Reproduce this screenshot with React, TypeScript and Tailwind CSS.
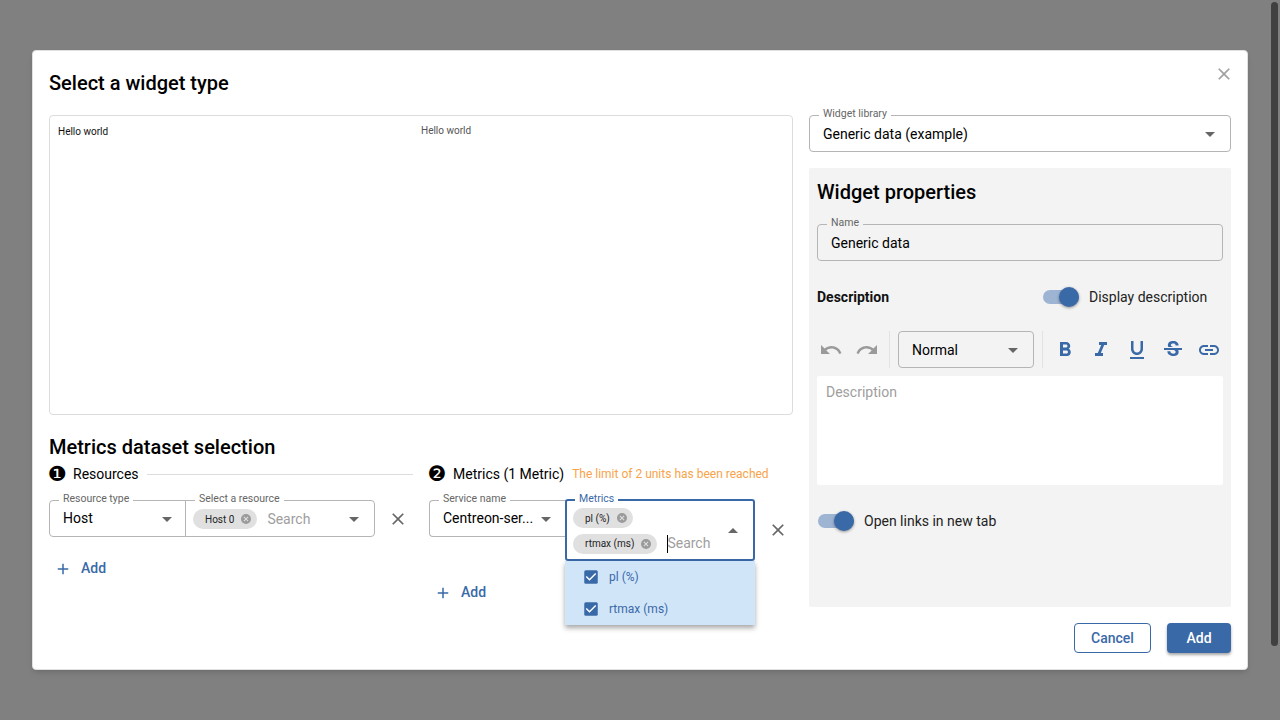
import React from "react";

const BLUE = "#3a69a7";

function Caret({ up = false, className = "" }: { up?: boolean; className?: string }) {
  return (
    <svg width="24" height="24" viewBox="0 0 24 24" className={`shrink-0 ${className}`} fill="#666666">
      <path d={up ? "m7 14 5-5 5 5z" : "m7 10 5 5 5-5z"} />
    </svg>
  );
}

function CloseX({ size = 20, color = "#666666" }: { size?: number; color?: string }) {
  return (
    <svg width={size} height={size} viewBox="0 0 24 24" fill={color} className="shrink-0">
      <path d="M19 6.41 17.59 5 12 10.59 6.41 5 5 6.41 10.59 12 5 17.59 6.41 19 12 13.41 17.59 19 19 17.59 13.41 12z" />
    </svg>
  );
}

function Legend({ text, left = "left-[9px]", bg = "bg-white", color = "text-[#666666]" }: { text: string; left?: string; bg?: string; color?: string }) {
  return (
    <span className={`absolute top-[-8px] ${left} ${bg} ${color} px-[4px] text-[10.5px] leading-[11px] whitespace-nowrap`}>{text}</span>
  );
}

function Chip({ text }: { text: string }) {
  return (
    <span className="flex h-[20px] w-fit items-center gap-[6px] rounded-full bg-[#e0e0e0] pl-[12px] pr-[5px] text-[10px] text-[#222222] whitespace-nowrap shrink-0">
      {text}
      <svg width="12" height="12" viewBox="0 0 24 24" fill="#9a9a9a">
        <path d="M12 2a10 10 0 1 0 0 20 10 10 0 0 0 0-20zm5 13.59L15.59 17 12 13.41 8.41 17 7 15.59 10.59 12 7 8.41 8.41 7 12 10.59 15.59 7 17 8.41 13.41 12z" />
      </svg>
    </span>
  );
}

function Num({ n }: { n: string }) {
  return (
    <span className="flex h-[20px] w-[16px] shrink-0 items-center justify-center font-['DejaVu_Sans',sans-serif] text-[21px] leading-none text-black">{n}</span>
  );
}

function Add() {
  return (
    <div className="flex items-center gap-[9px] text-[14px] font-medium" style={{ color: BLUE }}>
      <svg width="18" height="18" viewBox="0 0 24 24" fill={BLUE}><path d="M19 13h-6v6h-2v-6H5v-2h6V5h2v6h6z" /></svg>
      Add
    </div>
  );
}

function Switch() {
  return (
    <span className="relative block h-[14px] w-[36px] shrink-0 rounded-full bg-[#9db4d3]">
      <span className="absolute right-0 top-[-3px] h-[20px] w-[20px] rounded-full bg-[#3a69a7] shadow-[0_1px_3px_rgba(0,0,0,0.4)]" />
    </span>
  );
}

function Check() {
  return (
    <svg width="18" height="18" viewBox="0 0 24 24" className="shrink-0">
      <path fill={BLUE} d="M19 3H5a2 2 0 0 0-2 2v14a2 2 0 0 0 2 2h14a2 2 0 0 0 2-2V5a2 2 0 0 0-2-2z" />
      <path fill="#ffffff" d="M10 17l-5-5 1.41-1.41L10 14.17l7.59-7.59L19 8z" />
    </svg>
  );
}

function ToolIcon({ d, color = BLUE }: { d: string; color?: string }) {
  return (
    <svg width="24" height="24" viewBox="0 0 24 24" fill={color} className="shrink-0"><path d={d} /></svg>
  );
}

export default function App() {
  return (
    <div className="relative flex h-screen w-full items-start overflow-hidden bg-[#808080] pl-[32px] pt-[50px] font-['Roboto',sans-serif] text-black">
      <div className="flex h-[620px] w-[1216px] flex-col rounded-[4px] border border-[#e0e0e0] bg-white px-[16px] pt-[16px] shadow-md">
        <div className="flex min-h-0 flex-1 gap-[16px]">
          <div className="flex w-[744px] shrink-0 flex-col">
            <h1 className="h-[32px] text-[20px] font-medium leading-[32px]">Select a widget type</h1>
            <div className="mt-[16px] flex h-[300px] items-start rounded-[4px] border border-[#dcdcdc]">
              <span className="ml-[8px] mt-[10px] w-[363px] text-[10px] leading-[12px] text-[#111111]">Hello world</span>
              <span className="mt-[9px] text-[10px] leading-[12px] text-[#555555]">Hello world</span>
            </div>
            <h2 className="mt-[20px] h-[24px] text-[20px] font-medium leading-[24px]">Metrics dataset selection</h2>
            <div className="mt-[5px] flex gap-[16px]">
              <div className="w-[364px] shrink-0">
                <div className="flex h-[20px] items-center gap-[8px] text-[14px]">
                  <Num n="❶" />
                  <span>Resources</span>
                  <span className="h-px flex-1 bg-[#dddddd]" />
                </div>
                <div className="mt-[16px] flex items-center">
                  <div className="relative flex h-[37px] w-[137px] shrink-0 items-center justify-between rounded-l-[4px] border border-[#b5b5b5] pl-[13px] pr-[6px] text-[14px]">
                    <Legend text="Resource type" />
                    Host
                    <Caret />
                  </div>
                  <div className="relative ml-[-1px] flex h-[37px] w-[190px] shrink-0 items-center rounded-r-[4px] border border-[#b5b5b5] pl-[7px] pr-[8px]">
                    <Legend text="Select a resource" />
                    <span className="mt-px"><Chip text="Host 0" /></span>
                    <span className="ml-[10px] mt-px flex-1 text-[14px] text-[#9e9e9e]">Search</span>
                    <Caret />
                  </div>
                  <span className="ml-[13px]"><CloseX /></span>
                </div>
                <div className="mt-[21px] pl-[5px]"><Add /></div>
              </div>
              <div className="w-[364px] shrink-0">
                <div className="flex h-[20px] items-center gap-[8px] text-[14px]">
                  <Num n="❷" />
                  <span>Metrics (1 Metric)</span>
                  <span className="text-[12px] text-[#f7a34a]">The limit of 2 units has been reached</span>
                </div>
                <div className="mt-[15px] flex items-start">
                  <div className="relative mt-[1px] flex h-[37px] w-[137px] shrink-0 items-center justify-between rounded-l-[4px] border border-r-0 border-[#b5b5b5] pl-[13px] pr-[8px] text-[14px]">
                    <Legend text="Service name" />
                    <span className="whitespace-nowrap">Centreon-ser...</span>
                    <Caret />
                  </div>
                  <div className="relative ml-[-1px] flex h-[62px] w-[190px] shrink-0 rounded-[3px] border-2 border-[#3a69a7] pl-[6px] pr-[8px]">
                    <Legend text="Metrics" left="left-[8px]" color="text-[#3a69a7]" />
                    <div className="flex flex-1 flex-col gap-[5px] pt-[7px]">
                      <Chip text="pl (%)" />
                      <div className="flex items-center">
                        <Chip text="rtmax (ms)" />
                        <span className="ml-[10px] h-[18px] w-px bg-black" />
                        <span className="ml-[-1px] text-[14px] text-[#9e9e9e]">Search</span>
                      </div>
                    </div>
                    <Caret up className="mt-[18px]" />
                    <div className="absolute left-[-2px] top-[60px] z-10 w-[190px] bg-[#d1e5f9] text-[12px] text-[#3a69a7] shadow-[0_3px_5px_rgba(0,0,0,0.35)]">
                      <div className="flex h-[32px] items-center gap-[9px] pl-[17px]"><Check />pl (%)</div>
                      <div className="flex h-[32px] items-center gap-[9px] pl-[17px]"><Check />rtmax (ms)</div>
                    </div>
                  </div>
                  <span className="ml-[13px] mt-[21px]"><CloseX /></span>
                </div>
                <div className="mt-[21px] pl-[5px]"><Add /></div>
              </div>
            </div>
          </div>

          <div className="flex w-[422px] shrink-0 flex-col pt-[48px]">
            <div className="relative flex h-[37px] items-center justify-between rounded-[4px] border border-[#b5b5b5] pl-[13px] pr-[8px] text-[14px]">
              <Legend text="Widget library" />
              <span className="mt-[2px]">Generic data (example)</span>
              <Caret />
            </div>
            <div className="mt-[16px] flex h-[439px] flex-col rounded-[2px] bg-[#f3f3f3] px-[8px] pt-[12px]">
              <h2 className="h-[24px] text-[20px] font-medium leading-[24px]">Widget properties</h2>
              <div className="relative mt-[20px] flex h-[37px] items-center rounded-[4px] border border-[#b5b5b5] pl-[13px] text-[14px]">
                <Legend text="Name" bg="bg-[#f3f3f3]" />
                <span className="mt-[2px]">Generic data</span>
              </div>
              <div className="mt-[24px] flex h-[24px] items-center">
                <span className="w-[226px] text-[14px] font-bold text-[#111111]">Description</span>
                <Switch />
                <span className="ml-[10px] text-[14px] text-[#222222]">Display description</span>
              </div>
              <div className="mt-[22px] flex h-[37px] items-center">
                <span className="ml-[2px]"><ToolIcon color="#9a9a9a" d="M12.5 8c-2.65 0-5.05.99-6.9 2.6L2 7v9h9l-3.62-3.62c1.39-1.16 3.16-1.88 5.12-1.88 3.54 0 6.55 2.31 7.6 5.5l2.37-.78C21.08 11.03 17.15 8 12.5 8z" /></span>
                <span className="ml-[12px]"><ToolIcon color="#9a9a9a" d="M18.4 10.6C16.55 8.99 14.15 8 11.5 8c-4.65 0-8.58 3.03-9.96 7.22L3.9 16c1.05-3.19 4.05-5.5 7.6-5.5 1.95 0 3.73.72 5.12 1.88L13 16h9V7z" /></span>
                <span className="ml-[10px] h-[37px] w-px bg-[#e2e2e2]" />
                <div className="ml-[8px] flex h-[37px] w-[136px] items-center justify-between rounded-[4px] border border-[#b5b5b5] pl-[13px] pr-[8px] text-[14px]">
                  <span className="mt-[2px]">Normal</span>
                  <Caret />
                </div>
                <span className="ml-[8px] h-[37px] w-px bg-[#e2e2e2]" />
                <span className="ml-[10px]"><ToolIcon d="M15.6 10.79c.97-.67 1.65-1.77 1.65-2.79 0-2.26-1.75-4-4-4H7v14h7.04c2.09 0 3.71-1.7 3.71-3.79 0-1.52-.86-2.82-2.15-3.42zM10 6.5h3c.83 0 1.5.67 1.5 1.5s-.67 1.5-1.5 1.5h-3v-3zm3.5 9H10v-3h3.5c.83 0 1.5.67 1.5 1.5s-.67 1.5-1.5 1.5z" /></span>
                <span className="ml-[12px]"><ToolIcon d="M10 4v3h2.21l-3.42 8H6v3h8v-3h-2.21l3.42-8H18V4z" /></span>
                <span className="ml-[12px]"><ToolIcon d="M12 17c3.31 0 6-2.69 6-6V3h-2.5v8c0 1.93-1.57 3.5-3.5 3.5S8.500 12.930 8.500 11V3H6v8c0 3.31 2.690 6 6 6zm-7 2v2h14v-2H5z" /></span>
                <span className="ml-[12px]"><ToolIcon d="M7.240 8.750c-.260-.480-.390-1.030-.390-1.670 0-.610.130-1.160.400-1.670.260-.500.630-.930 1.110-1.290.480-.350 1.050-.630 1.700-.830.660-.190 1.390-.290 2.180-.290.810 0 1.540.110 2.210.340.660.220 1.230.540 1.690.940.470.400.830.880 1.080 1.430.250.550.380 1.150.380 1.810h-3.010c0-.310-.050-.590-.150-.850-.090-.270-.240-.490-.440-.680-.200-.190-.450-.330-.750-.440-.300-.100-.660-.160-1.060-.160-.390 0-.740.040-1.030.130-.290.090-.530.210-.72.360-.190.160-.340.340-.440.550-.100.210-.150.430-.150.660 0 .480.250.880.740 1.210.380.250.770.480 1.410.700H7.390c-.050-.080-.110-.170-.150-.250zM21 12v-2H3v2h9.620c.180.070.400.140.550.200.370.170.660.340.870.510.210.170.350.360.430.570.070.200.110.430.110.690 0 .230-.050.450-.140.660-.090.200-.230.380-.420.530-.190.150-.420.260-.710.350-.290.080-.630.130-1.010.130-.430 0-.830-.040-1.180-.130s-.660-.230-.910-.420c-.250-.190-.450-.440-.590-.750-.140-.310-.250-.760-.250-1.210H6.400c0 .550.080 1.130.240 1.580.160.450.370.850.650 1.210.280.350.600.660.980.920.370.260.780.480 1.220.650.440.170.900.300 1.380.390.480.080.960.130 1.440.130.800 0 1.530-.090 2.180-.280s1.210-.450 1.670-.790c.460-.340.820-.770 1.070-1.270s.380-1.070.380-1.710c0-.600-.100-1.140-.310-1.610-.050-.110-.110-.230-.170-.330H21z" /></span>
                <span className="ml-[12px]"><ToolIcon d="M3.900 12c0-1.710 1.390-3.100 3.100-3.100h4V7H7c-2.760 0-5 2.240-5 5s2.240 5 5 5h4v-1.900H7c-1.710 0-3.100-1.390-3.100-3.100zM8 13h8v-2H8v2zm9-6h-4v1.900h4c1.710 0 3.100 1.390 3.100 3.100s-1.390 3.100-3.100 3.100h-4V17h4c2.760 0 5-2.240 5-5s-2.240-5-5-5z" /></span>
              </div>
              <div className="mt-[8px] h-[109px] rounded-[2px] bg-white px-[9px] py-[6px] text-[14px] text-[#9e9e9e]">Description</div>
              <div className="mt-[24px] flex h-[24px] items-center gap-[10px] pl-[1px] text-[14px] text-[#222222]">
                <Switch />
                Open links in new tab
              </div>
            </div>
          </div>
        </div>
        <div className="flex justify-end gap-[16px] pb-[16px] pt-[16px]">
          <button className="h-[30px] w-[77px] rounded-[4px] border border-[#3a69a7] bg-white text-[14px] font-medium text-[#3a69a7]">Cancel</button>
          <button className="h-[30px] w-[64px] rounded-[4px] bg-[#3a69a7] text-[14px] font-medium text-white shadow-[0_2px_3px_rgba(0,0,0,0.35)]">Add</button>
        </div>
      </div>
      <button aria-label="Close" className="absolute left-[1214px] top-[64px]"><CloseX size={20} color="#a0a0a0" /></button>
      <div className="absolute right-[2px] top-[2px] h-[644px] w-[7px] rounded-full bg-[#404040]" />
    </div>
  );
}
